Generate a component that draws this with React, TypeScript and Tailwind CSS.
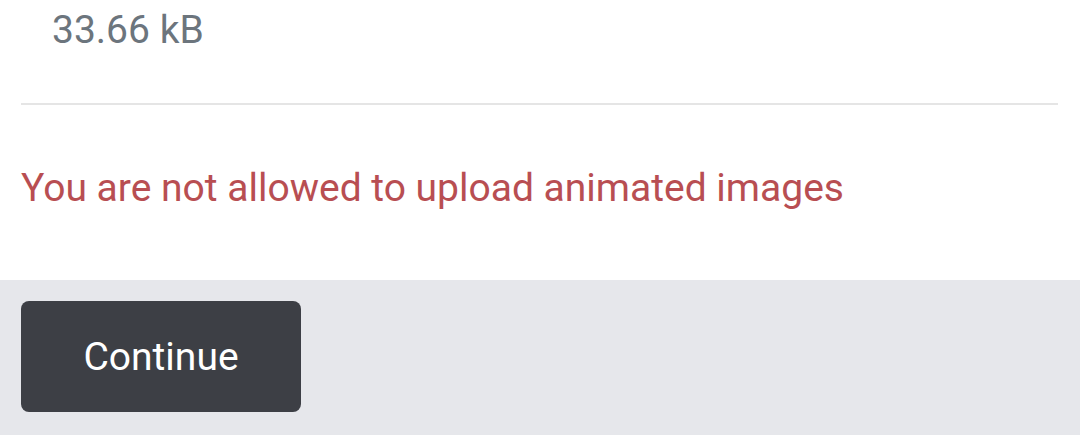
export default function App() {
  return (
    <div className="h-[435px] w-[1080px] overflow-hidden bg-white font-['Roboto',sans-serif]">
      <div className="h-[280px] bg-white px-[21px]">
        <p className="pl-[31px] pt-[8px] text-[39px] leading-[44px] text-[#6c757d]">33.66 kB</p>
        <div className="mt-[51px] mr-[1px] h-[2px] bg-[#e5e5e5]" />
        <p className="mt-[61px] text-[39px] leading-[44px] text-[#b84e52]">
          You are not allowed to upload animated images
        </p>
      </div>
      <div className="h-[155px] bg-[#e6e7eb] px-[21px] pt-[21px]">
        <button className="flex h-[111px] w-[280px] items-center justify-center rounded-[8px] bg-[#3d3f45] pt-[2px] text-[39px] text-white">
          Continue
        </button>
      </div>
    </div>
  );
}
